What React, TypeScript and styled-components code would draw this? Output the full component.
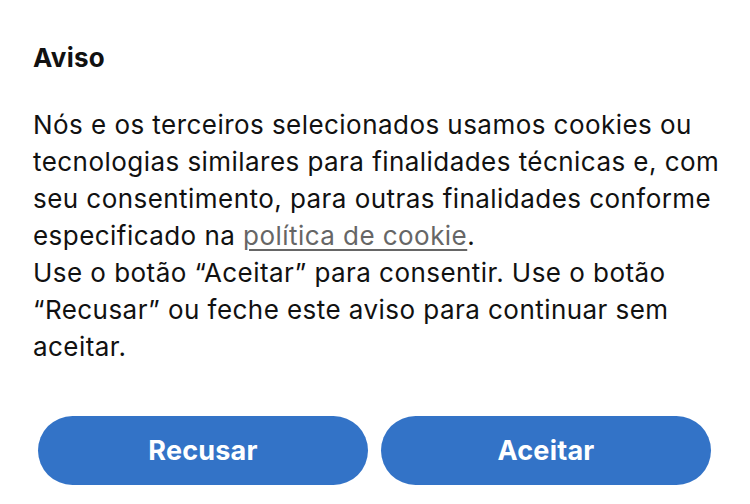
import React from "react";
import styled, { createGlobalStyle } from "styled-components";

const Global = createGlobalStyle`
  html, body { margin: 0; padding: 0; background: #ffffff; }
  body { font-family: Inter, "Noto Sans", sans-serif; -webkit-font-smoothing: antialiased; }
`;

const Page = styled.div`
  width: 750px;
  height: 504px;
  box-sizing: border-box;
  padding: 42px 34px 0 33px;
  display: flex;
  flex-direction: column;
  color: #111111;
`;

const Title = styled.h1`
  margin: 0;
  font-size: 26px;
  line-height: 32px;
  font-weight: 700;
  letter-spacing: 0.2px;
`;

const Body = styled.p`
  margin: 32px 0 0 0;
  font-size: 26px;
  line-height: 37px;
  font-weight: 400;
  letter-spacing: 0.45px;
  white-space: nowrap;
`;

const Link = styled.a`
  color: #666666;
  text-decoration: underline;
  text-underline-offset: 4px;
  text-decoration-thickness: 1.5px;
`;

const Actions = styled.div`
  margin: 51px 5px 0 5px;
  display: grid;
  grid-template-columns: 1fr 1fr;
  gap: 13px;
`;

const Button = styled.button`
  height: 69px;
  border: none;
  border-radius: 35px;
  background: #3373c7;
  color: #ffffff;
  font-family: Inter, "Noto Sans", sans-serif;
  font-size: 27px;
  font-weight: 700;
  letter-spacing: 0.2px;
  cursor: pointer;
`;

export default function App() {
  return (
    <>
      <Global />
      <Page>
        <Title>Aviso</Title>
        <Body>
          Nós e os terceiros selecionados usamos cookies ou
          <br />
          tecnologias similares para finalidades técnicas e, com
          <br />
          seu consentimento, para outras finalidades conforme
          <br />
          especificado na <Link href="#">política de cookie</Link>.
          <br />
          Use o botão “Aceitar” para consentir. Use o botão
          <br />
          “Recusar” ou feche este aviso para continuar sem
          <br />
          aceitar.
        </Body>
        <Actions>
          <Button>Recusar</Button>
          <Button>Aceitar</Button>
        </Actions>
      </Page>
    </>
  );
}
